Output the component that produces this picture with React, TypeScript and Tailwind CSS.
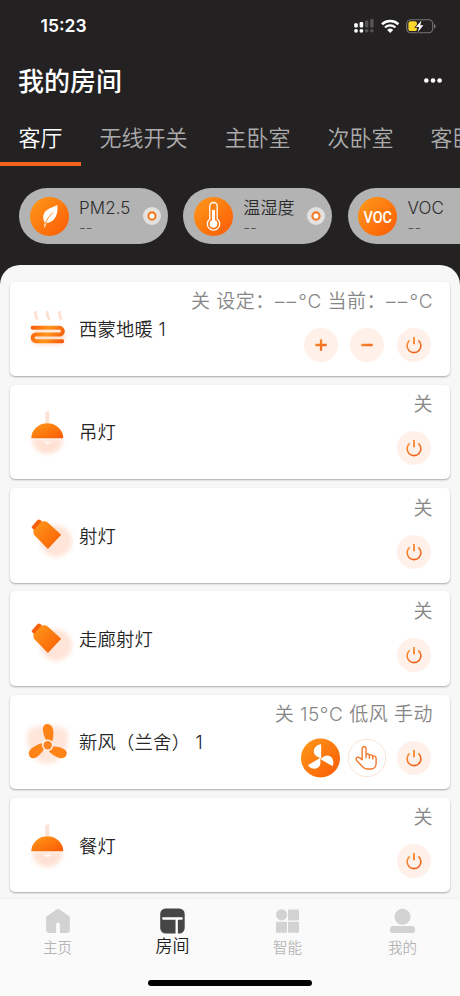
import React from "react";

type ButtonKind = "plus" | "minus" | "power" | "fan" | "hand";

type Device = {
  name: string;
  icon: "heating" | "pendant" | "spot" | "blades";
  status: string;
  buttons: ButtonKind[];
};

const tabs = ["客厅", "无线开关", "主卧室", "次卧室", "客卧室"];

const devices: Device[] = [
  {
    name: "西蒙地暖 1",
    icon: "heating",
    status: "关 设定：––°C 当前：––°C",
    buttons: ["plus", "minus", "power"],
  },
  { name: "吊灯", icon: "pendant", status: "关", buttons: ["power"] },
  { name: "射灯", icon: "spot", status: "关", buttons: ["power"] },
  { name: "走廊射灯", icon: "spot", status: "关", buttons: ["power"] },
  {
    name: "新风（兰舍） 1",
    icon: "blades",
    status: "关 15°C 低风 手动",
    buttons: ["fan", "hand", "power"],
  },
  { name: "餐灯", icon: "pendant", status: "关", buttons: ["power"] },
];

// gradients and blur shared by all the icons
const Defs = () => (
  <svg className="absolute h-0 w-0" aria-hidden="true">
    <defs>
      <linearGradient id="orange" x1="0" y1="0" x2="1" y2="1">
        <stop offset="0" stopColor="#ff9a1a" />
        <stop offset="1" stopColor="#fb5a05" />
      </linearGradient>
      <linearGradient
        id="stroke"
        gradientUnits="userSpaceOnUse"
        x1="8"
        y1="6"
        x2="18"
        y2="20"
      >
        <stop offset="0" stopColor="#f9963a" />
        <stop offset="1" stopColor="#ee5a12" />
      </linearGradient>
      <linearGradient
        id="coil"
        gradientUnits="userSpaceOnUse"
        x1="10"
        y1="34"
        x2="44"
        y2="48"
      >
        <stop offset="0" stopColor="#fc5c08" />
        <stop offset="0.5" stopColor="#ff961c" />
        <stop offset="1" stopColor="#f4580c" />
      </linearGradient>
      <filter id="glow" x="-40%" y="-40%" width="180%" height="180%">
        <feGaussianBlur stdDeviation="2" />
      </filter>
    </defs>
  </svg>
);

const StatusBar = () => (
  <div className="flex h-[52px] items-center justify-between pl-[40.5px] pr-[24px]">
    <span className="font-[Inter] text-[17.5px] font-semibold leading-5 text-white">
      15:23
    </span>
    <svg width="84" height="20" viewBox="0 0 84 20" fill="none">
      <g fill="#fff">
        <rect x="2.2" y="7.2" width="3.6" height="4.2" rx="1" />
        <rect x="7.6" y="6" width="3.6" height="5.4" rx="1" />
        <circle cx="4" cy="14.8" r="1.9" />
        <circle cx="9.4" cy="14.8" r="1.9" />
      </g>
      <g fill="#565455">
        <rect x="13" y="4.6" width="3.4" height="7" rx="1" />
        <rect x="18.2" y="3" width="3.4" height="8.6" rx="1" />
        <circle cx="14.7" cy="14.8" r="1.8" />
        <circle cx="19.9" cy="14.8" r="1.8" />
      </g>
      <path
        d="M30 8.2a12.2 12.2 0 0 1 16.4 0"
        stroke="#fff"
        strokeWidth="2.5"
      />
      <path
        d="M33 11.5a7.6 7.6 0 0 1 10.4 0"
        stroke="#fff"
        strokeWidth="2.3"
      />
      <path d="M38.2 17l-3-3.1a4.6 4.6 0 0 1 6 0z" fill="#fff" />
      <rect
        x="54.7"
        y="3.7"
        width="26"
        height="13"
        rx="4"
        stroke="#767475"
        strokeWidth="1.1"
      />
      <path d="M82 8v4.6c1-.4 1.6-1.2 1.6-2.3S83 8.4 82 8z" fill="#767475" />
      <rect x="56.4" y="5.3" width="8.6" height="9.8" rx="2.2" fill="#fcd62c" />
      <path
        d="M69.6 4.2l-5.7 6.8h3.2l-1.3 5.2 5.6-7h-3.2z"
        fill="#fff"
        stroke="#242122"
        strokeWidth="1.6"
        paintOrder="stroke"
      />
    </svg>
  </div>
);

type PillProps = {
  title: string;
  children: React.ReactNode;
};

const Pill = ({ title, children }: PillProps) => (
  <div className="flex h-[56px] w-[149px] shrink-0 items-center rounded-full bg-[#b3b3b3] pl-[10.5px] pr-[7.5px]">
    <svg width="39" height="39" viewBox="0 0 39 39" className="shrink-0">
      <circle cx="19.5" cy="19.5" r="19.5" fill="url(#orange)" />
      {children}
    </svg>
    <div className="ml-[10.5px] flex h-full flex-1 flex-col whitespace-nowrap pt-[8px]">
      <span className="text-[17px] leading-6 tracking-[0.1px] text-[#2b2b2b]">
        {title}
      </span>
      <span className="text-[15px] leading-[15px] text-[#555]">--</span>
    </div>
    <svg width="18" height="18" viewBox="0 0 18 18" className="shrink-0">
      <circle cx="9" cy="9" r="9" fill="#e4e2e1" />
      <circle
        cx="9"
        cy="9"
        r="3.6"
        fill="#fff"
        stroke="#f47a22"
        strokeWidth="2.1"
      />
    </svg>
  </div>
);

const DeviceIcon = ({ icon }: { icon: Device["icon"] }) => (
  <svg
    width="56"
    height="72"
    viewBox="0 0 56 72"
    fill="none"
    className="shrink-0"
  >
    {icon === "heating" && (
      <>
        <rect
          x="11"
          y="37"
          width="34"
          height="15"
          rx="6"
          fill="#ffd9c6"
          opacity="0.8"
          filter="url(#glow)"
        />
        <g stroke="#fde0d2" strokeWidth="2.8">
          <path d="M16 18c-1.8 3-.4 5.8 1.8 8.6" />
          <path d="M28 18c-1.8 3-.4 5.8 1.8 8.6" />
          <path d="M40 18c-1.8 3-.4 5.8 1.8 8.6" />
        </g>
        <path
          d="M12.6 34.8H39.5a3.35 3.35 0 0 1 0 6.7H16a3.35 3.35 0 0 0 0 6.7H42.2"
          stroke="url(#coil)"
          strokeWidth="3.9"
          strokeLinecap="round"
        />
      </>
    )}
    {icon === "pendant" && (
      <>
        <path
          d="M12 42.5h31a15.5 15.5 0 0 1-31 0z"
          fill="#ffd8c6"
          opacity="0.75"
          filter="url(#glow)"
        />
        <rect x="25.3" y="15.5" width="4" height="11.5" rx="1" fill="#fde3d6" />
        <path d="M23.5 45.5h8l-4 3z" fill="#fff" opacity="0.8" />
        <path d="M11.3 42.2a16 14.9 0 0 1 32 0z" fill="url(#orange)" />
      </>
    )}
    {icon === "spot" && (
      <>
        <circle
          cx="36"
          cy="42"
          r="16"
          fill="#ffdccc"
          opacity="0.75"
          filter="url(#glow)"
        />
        <path
          d="M12 27.3l5.6-6.2c.8-.9 1.900-.9 2.800-.1l1.600 1.500-7.500 9-2.300-2.200c-.6-.6-.7-1.400-.2-2z"
          fill="#f6610d"
        />
        <path
          d="M13.300 31.700l8.200-8.900c1.800-1 4.400-.6 6.200.8L41.200 35.700 27.900 50.100 15.200 37c-1.300-1.400-2-3.300-1.900-5.300z"
          fill="url(#orange)"
        />
      </>
    )}
    {icon === "blades" && (
      <>
        <path
          d="M8 24c10-6 30-6 39 0 3 10 0 24-10 31-6 4-13 4-19 0C8 48 5 34 8 24z"
          fill="#ffe0d3"
          opacity="0.8"
          filter="url(#glow)"
        />
        {[0, 120, 240].map((deg) => (
          <path
            key={deg}
            d="M26.500 35c-2-3.600-3.600-8-3.600-11.600 0-3.200 1.700-5.400 4.400-5.400 3.200 0 5 2.200 5.700 5.300.7 3.700.5 7.700-.5 11.700z"
            fill="#ff8317"
            transform={`rotate(${deg} 27.7 39.2)`}
          />
        ))}
        <circle cx="27.7" cy="39.2" r="5.8" fill="#fff3ec" />
        <circle cx="27.7" cy="39.2" r="4.2" fill="#ff8420" />
      </>
    )}
  </svg>
);

const DeviceButton = ({ kind }: { kind: ButtonKind }) => {
  if (kind === "fan") {
    return (
      <svg width="40" height="40" viewBox="0 0 40 40">
        <circle cx="19.5" cy="20" r="19.5" fill="url(#orange)" />
        {[0, 120, 240].map((deg) => (
          <path
            key={deg}
            d="M20.100 20.400V6.200c-4.400.6-7.300 3.600-7.300 7.200 0 3.200 2.300 5 7.300 7z"
            fill="#fff"
            transform={`rotate(${deg} 19.5 20.5)`}
          />
        ))}
      </svg>
    );
  }
  if (kind === "hand") {
    return (
      <svg width="40" height="40" viewBox="0 0 40 40" fill="none">
        <circle cx="20" cy="20" r="18.7" fill="#fff" stroke="#fbe3d6" />
        <path
          d="M15.200 21.800V10.700a1.900 1.900 0 0 1 3.800 0v5.600c1.200-1 3.200-.5 3.400 1 1.200-.9 3.200-.3 3.400 1.100 1.400-.7 3.300.1 3.300 1.800v5.400c0 3.200-2.200 5.400-5.200 5.400h-3.600c-1.700 0-3-.6-4.200-1.800l-6.200-6.400c-1.600-1.800-.4-4 1.600-3.600 1.300.3 2.400 1.200 3.700 2.600zM19 16.300v3.500M22.400 17.300v3M25.800 18.400v2.600"
          stroke="#f2772b"
          strokeWidth="1.4"
          strokeLinejoin="round"
          strokeLinecap="round"
        />
      </svg>
    );
  }
  return (
    <div className="flex h-[40px] w-[40px] items-center justify-center">
      <div className="flex h-[34px] w-[34px] items-center justify-center rounded-full bg-[#fff1e9]">
        <svg
          width="26"
          height="26"
          viewBox="0 0 26 26"
          fill="none"
          stroke="url(#stroke)"
        >
          {kind === "plus" && (
            <path d="M7.3 13.01h11.4M13.01 7.3v11.4" strokeWidth="2.3" />
          )}
          {kind === "minus" && <path d="M7.3 13l11.4.02" strokeWidth="2.3" />}
          {kind === "power" && (
            <>
              <path d="M8.6 8.4a6.9 6.9 0 1 0 8.8 0" strokeWidth="1.6" />
              <path d="M13 5l.01 7.2" strokeWidth="1.8" />
            </>
          )}
        </svg>
      </div>
    </div>
  );
};

// missing readings come as a pair of dashes and are spaced wider
const StatusText = ({ text }: { text: string }) => (
  <span className="-ml-20 whitespace-pre text-[19px] leading-[26px] tracking-[0.5px] text-[#868686]">
    {text.split(/(––)/).map((part, i) =>
      part === "––" ? (
        <span key={i} className="tracking-[2.2px]">
          {part}
        </span>
      ) : (
        part
      )
    )}
  </span>
);

const DeviceCard = ({ device }: { device: Device }) => (
  <div className="flex h-[94.5px] shrink-0 items-center rounded-[5px] bg-white pl-[10px] pr-[17px] shadow-[0_1px_2px_rgba(0,0,0,0.32)]">
    <DeviceIcon icon={device.icon} />
    <span className="ml-[3px] whitespace-pre pt-[2px] text-[18.3px] tracking-[0.25px] text-[#262626]">
      {device.name}
    </span>
    <div className="ml-auto flex h-full flex-col items-end pt-[7.5px]">
      <StatusText text={device.status} />
      <div className="-mr-[1px] mt-[10px] flex gap-[6.7px]">
        {device.buttons.map((kind) => (
          <DeviceButton key={kind} kind={kind} />
        ))}
      </div>
    </div>
  </div>
);

type NavItemProps = {
  label: string;
  active?: boolean;
  children: React.ReactNode;
};

const NavItem = ({ label, active, children }: NavItemProps) => (
  <div className="flex flex-1 flex-col items-center pt-[8px]">
    <svg width="28" height="28" viewBox="0 0 28 28" fill="none">
      {children}
    </svg>
    {active ? (
      <span className="text-[17px] leading-[23px] text-[#222]">{label}</span>
    ) : (
      <span className="text-[14.5px] leading-[26px] text-[#b5b5b5]">
        {label}
      </span>
    )}
  </div>
);

const App = () => {
  return (
    <div className="flex h-[996px] w-[460px] flex-col overflow-hidden bg-[#242122] font-['Inter','Noto_Sans_CJK_SC',sans-serif] font-[350]">
      <Defs />
      <StatusBar />
      <div className="flex h-[58px] items-center justify-between pl-[18px] pr-[18px]">
        <h1 className="pt-[2px] text-[26px] font-medium leading-none text-white">
          我的房间
        </h1>
        <svg width="18" height="6" viewBox="0 0 18 6" fill="#fff">
          <circle cx="2.3" cy="2.5" r="2.3" />
          <circle cx="9" cy="2.5" r="2.3" />
          <circle cx="15.6" cy="2.5" r="2.3" />
        </svg>
      </div>
      <div className="flex h-[56px] shrink-0">
        {tabs.map((tab, i) => (
          <div
            key={tab}
            className={
              i === 0
                ? "shrink-0 border-b-4 border-[#f2651a] px-[18.5px] text-[22px] leading-[56px] text-white"
                : "shrink-0 px-[18.5px] text-[22px] leading-[56px] text-[#ababab]"
            }
          >
            {tab}
          </div>
        ))}
      </div>
      <div className="flex h-[99px] shrink-0 gap-[15.3px] pl-[19px] pt-[22px]">
        <Pill title="PM2.5">
          <path
            d="M14.6 31c-.5-1.400-.3-3.300.3-5-3-5.600-1.900-10.600 2.800-13.600 2.800-1.800 6.300-2.400 9.500-4.400.9 5.600-.2 10.700-3.400 14.400-2 2.200-4.700 3.400-7.600 3.600-.6 1.600-.9 3.300-1.600 5z"
            fill="#fff"
          />
          <path
            d="M15 26.800c1.700-4.300 4.400-8 8-11.300"
            stroke="#ff8418"
            strokeWidth="1"
            fill="none"
          />
        </Pill>
        <Pill title="温湿度">
          <path
            d="M15.8 22V9.200a3.700 3.700 0 0 1 7.400 0V22a6.200 6.200 0 1 1-7.400 0z"
            stroke="#fff"
            strokeWidth="1.3"
            fill="none"
          />
          <path d="M19.5 13v13" stroke="#fff" strokeWidth="3" />
          <circle cx="19.5" cy="26.8" r="3.9" fill="#fff" />
        </Pill>
        <Pill title="VOC">
          <text
            x="19.7"
            y="25.7"
            textAnchor="middle"
            fontFamily="Roboto, sans-serif"
            fontSize="16.5"
            fontWeight="500"
            textLength="28.5"
            lengthAdjust="spacingAndGlyphs"
            fill="#fff"
          >
            VOC
          </text>
        </Pill>
      </div>
      <div className="flex h-[633px] shrink-0 flex-col gap-[8.8px] overflow-hidden rounded-t-[20px] bg-[#f7f7f7] px-[10px] pt-[16.5px]">
        {devices.map((device) => (
          <DeviceCard key={device.name} device={device} />
        ))}
      </div>
      <div className="flex h-[98px] shrink-0 flex-col items-center border-t border-[#f1f1f1] bg-[#fafafa]">
        <div className="flex w-full">
          <NavItem label="主页">
            <path
              d="M12.5 2.6a2.5 2.5 0 0 1 3 0l9 6.200c.8.600 1.300 1.300 1.300 2.300v12.500c0 1.400-1 2.400-2.400 2.400H15.900v-8.500a1.900 1.900 0 0 0-3.800 0V26H4.600a2.400 2.400 0 0 1-2.400-2.400V11.100c0-1 .5-1.700 1.300-2.300z"
              fill="#d2d2d2"
            />
          </NavItem>
          <NavItem label="房间" active>
            <rect x="1.2" y="1.5" width="24.5" height="25" rx="5.5" fill="#464646" />
            <path
              d="M4.2 11.5h18.5M17.7 12v14.5"
              stroke="#fff"
              strokeWidth="2.3"
              strokeLinecap="round"
            />
          </NavItem>
          <NavItem label="智能">
            <g fill="#d2d2d2">
              <circle cx="7.6" cy="7.9" r="5.6" />
              <rect x="14" y="2.4" width="11" height="11" rx="1" />
              <rect x="2" y="14.8" width="11" height="11" rx="1" />
              <rect x="14" y="14.8" width="11" height="11" rx="1" />
            </g>
          </NavItem>
          <NavItem label="我的">
            <g fill="#d2d2d2">
              <circle cx="13.5" cy="9.8" r="8" />
              <path d="M4.5 19h18a3.500 3.500 0 0 1 3.500 3.500V24a2 2 0 0 1-2 2h-21a2 2 0 0 1-2-2v-1.500A3.500 3.500 0 0 1 4.500 19z" />
            </g>
          </NavItem>
        </div>
        <div className="mt-[18.5px] h-[6px] w-[164px] rounded-full bg-black" />
      </div>
    </div>
  );
};

export default App;
